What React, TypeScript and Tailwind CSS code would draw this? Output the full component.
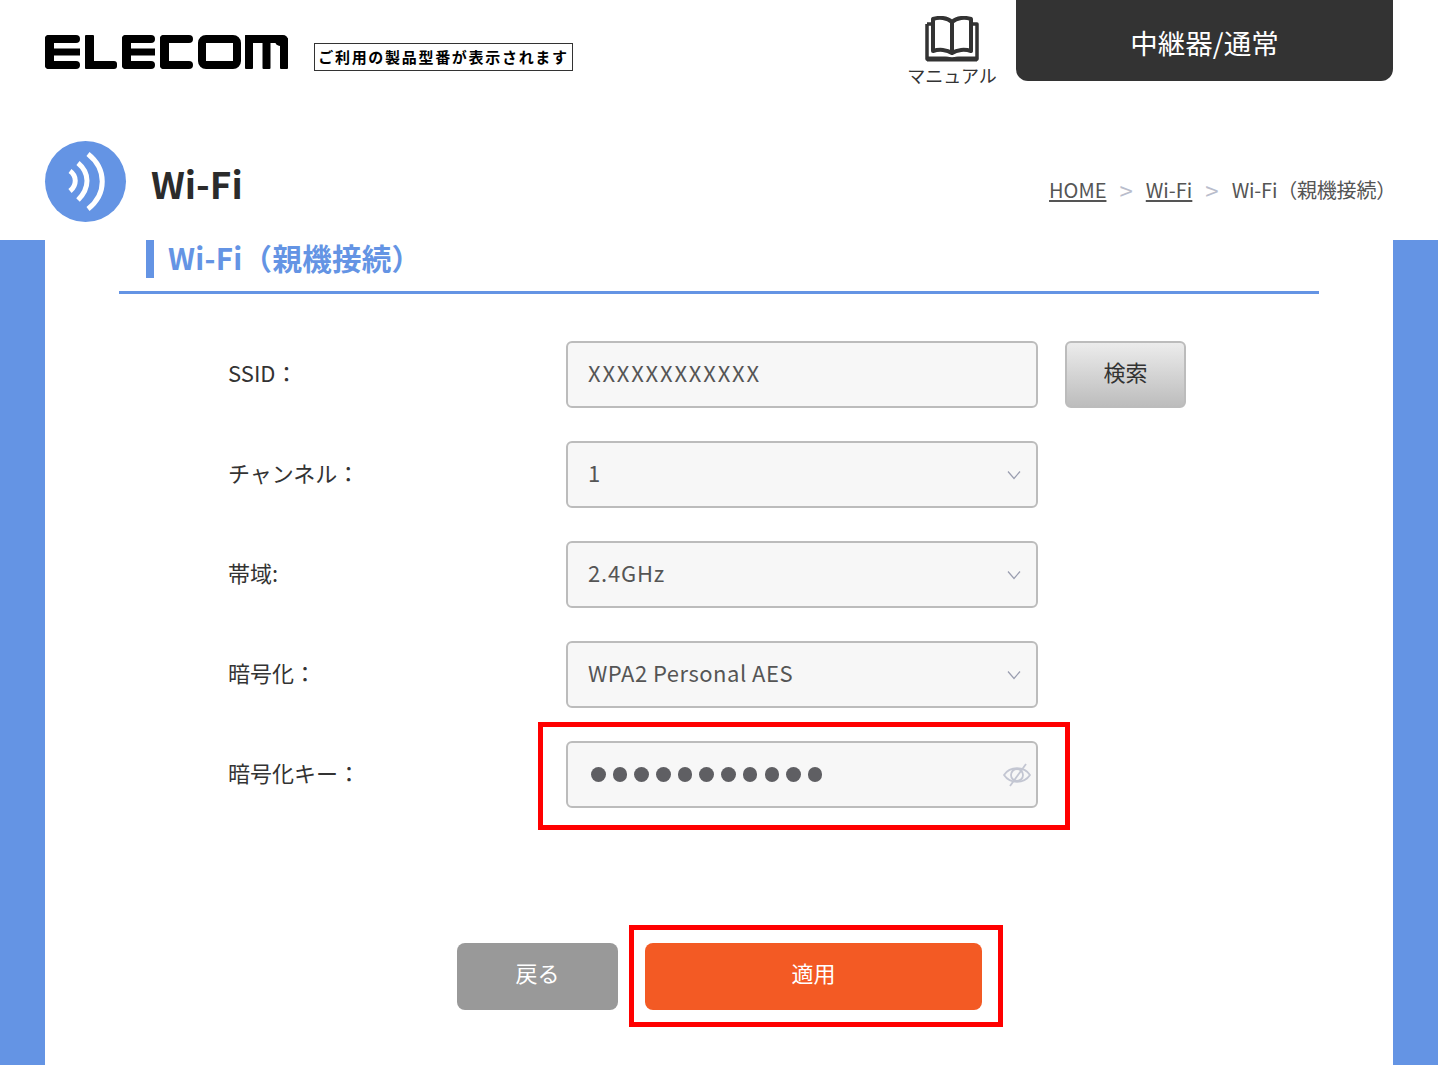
const font = { fontFamily: '"Noto Sans CJK JP", "Noto Sans", sans-serif' };

function ElecomLogo() {
  // wordmark drawn as blocks, the letters are squared off in the original
  return (
    <svg width="243" height="34" viewBox="0 0 243 34" role="img" aria-label="ELECOM" fill="#000">
      {/* E */}
      <rect x="0" y="0" width="35" height="8" rx="4" />
      <rect x="4" y="13.5" width="31" height="7" />
      <rect x="0" y="26" width="35" height="8" rx="4" />
      <rect x="0" y="0" width="9" height="34" rx="4" />
      {/* L */}
      <rect x="40" y="0" width="9" height="34" rx="1" />
      <rect x="40" y="26" width="32" height="8" rx="3" />
      {/* E */}
      <rect x="77" y="0" width="33" height="8" rx="4" />
      <rect x="81" y="13.5" width="29" height="7" />
      <rect x="77" y="26" width="33" height="8" rx="4" />
      <rect x="77" y="0" width="9" height="34" rx="4" />
      {/* C */}
      <rect x="115" y="0" width="33" height="8" rx="4" />
      <rect x="115" y="26" width="33" height="8" rx="4" />
      <rect x="115" y="0" width="9" height="34" rx="4" />
      {/* O */}
      <rect x="157" y="4" width="35" height="26" rx="4" fill="none" stroke="#000" strokeWidth="8" />
      {/* M */}
      <rect x="200" y="0" width="8" height="34" rx="1" />
      <rect x="217.500" y="0" width="8" height="34" rx="1" />
      <rect x="235" y="3" width="8" height="31" rx="1" />
      <rect x="200" y="0" width="38" height="8" rx="1" />
      <rect x="230" y="0" width="13" height="11" rx="5" />
    </svg>
  );
}

function BookIcon() {
  return (
    <svg width="54" height="46" viewBox="0 0 54 46" fill="none" stroke="#333">
      <path d="M27 6C22 1.5 14 1 8 3V35C14 33 22 33.5 27 37C32 33.500 40 33 46 35V3C40 1 32 1.500 27 6Z" strokeWidth="4" strokeLinejoin="round" />
      <path d="M27 6V37" strokeWidth="4" />
      <path d="M2 8V43H52V8H47M2 8H7" strokeWidth="3.5" strokeLinejoin="round" />
      <path d="M2 41H20C23 41 25 41.500 27 42.500C29 41.500 31 41 34 41H52V45H2Z" fill="#333" strokeWidth="1" />
    </svg>
  );
}

function WifiBadge() {
  return (
    <div className="w-[81px] h-[81px] rounded-full bg-[#6494e4] shrink-0">
      <svg width="81" height="81" viewBox="0 0 81 81" fill="none" stroke="#fff" strokeWidth="5">
        <path d="M25 30C32 35 32 44 25 50" />
        <path d="M33 22C45 32 45 47 33 59" />
        <path d="M43 13C62 28 62 53 43 68" />
      </svg>
    </div>
  );
}

function Chevron() {
  return (
    <svg width="14" height="10" viewBox="0 0 14 10" fill="none" stroke="#9a9eb0" strokeWidth="1.2">
      <path d="M1 1.500L7 8.500L13 1.500" />
    </svg>
  );
}

function EyeSlash() {
  return (
    <svg width="28" height="24" viewBox="0 0 28 24" fill="none" stroke="#c3c6d2" strokeWidth="1.800">
      <path d="M1 12C7 3 21 3 27 12C21 21 7 21 1 12Z" strokeLinejoin="round" />
      <circle cx="14" cy="12" r="6" />
      <path d="M23 1L7 23" />
    </svg>
  );
}

function Row({ label, children }: { label: string; children: React.ReactNode }) {
  return (
    <div className="flex items-center h-[67px]">
      <div className="w-[338px] pb-[4px] text-[22px] text-[#333]">{label}</div>
      {children}
    </div>
  );
}

function Field({ value, select, spacing }: { value: string; select?: boolean; spacing?: string }) {
  return (
    <div className="w-[472px] h-[67px] flex items-center justify-between pl-[20px] pr-[15px] rounded-md border-2 border-[#bcbcbc] bg-[#f7f7f7] text-[22px] text-[#555]">
      <span className={`mb-[4px] ${spacing ?? ""}`}>{value}</span>
      {select && <Chevron />}
    </div>
  );
}

export default function App() {
  return (
    <div className="w-[1438px] h-[1065px] overflow-hidden bg-white flex flex-col" style={font}>
      <header className="h-[141px] shrink-0 flex items-start pl-[45px] pr-[45px]">
        <div className="mt-[35px]">
          <ElecomLogo />
        </div>
        <div className="mt-[43px] ml-[26px] w-[259px] h-[28px] border border-[#333] flex items-center justify-center text-[15px] font-bold tracking-[1.700px] text-black whitespace-nowrap">
          ご利用の製品型番が表示されます
        </div>
        <div className="ml-auto mt-[16px] w-[88px] flex flex-col items-center">
          <BookIcon />
          <span className="text-[18px] leading-[24px] mt-[1px] text-[#333] whitespace-nowrap">マニュアル</span>
        </div>
        <div className="ml-[20px] w-[377px] h-[81px] rounded-b-xl bg-[#333] flex items-center justify-center pt-[4px] text-[27.500px] text-white">
          中継器/通常
        </div>
      </header>

      <div className="h-[99px] shrink-0 flex items-start pl-[45px] pr-[42px]">
        <WifiBadge />
        <h1 className="ml-[25px] mt-[16px] text-[37px] leading-[52px] font-bold text-[#2b2b2b]">Wi-Fi</h1>
        <nav className="ml-auto mt-[34px] flex items-center text-[20px] leading-[30px] text-[#555]">
          <span className="underline underline-offset-2">HOME</span>
          <span className="mx-[13px] text-[24px] leading-[30px] text-[#b9bdcc]">&gt;</span>
          <span className="underline underline-offset-2">Wi-Fi</span>
          <span className="mx-[13px] text-[24px] leading-[30px] text-[#b9bdcc]">&gt;</span>
          <span className="tracking-[-0.200px]">Wi-Fi（親機接続）</span>
        </nav>
      </div>

      <div className="flex-1 flex">
        <div className="w-[45px] bg-[#6494e4]" />
        <main className="flex-1 flex flex-col pl-[74px] pr-[74px]">
          <div className="border-b-[3px] border-[#6494e4] h-[54px] pl-[27px]">
            <h2 className="h-[38px] border-l-[8px] border-[#6494e4] pl-[14px] text-[29.500px] leading-[34px] tracking-[0.300px] font-bold text-[#6494e4] whitespace-nowrap">
              Wi-Fi（親機接続）
            </h2>
          </div>

          <div className="mt-[47px] pl-[109px] flex flex-col gap-[33px]">
            <Row label="SSID：">
              <Field value="XXXXXXXXXXXX" spacing="tracking-[1.800px]" />
              <button className="ml-[27px] w-[121px] h-[67px] pb-[6px] rounded-md border-2 border-[#bcbcbc] bg-gradient-to-b from-[#ececec] to-[#bdbdbd] text-[22px] text-[#333]">
                検索
              </button>
            </Row>
            <Row label="チャンネル：">
              <Field value="1" select />
            </Row>
            <Row label="帯域:">
              <Field value="2.4GHz" select spacing="tracking-[0.800px]" />
            </Row>
            <Row label="暗号化：">
              <Field value="WPA2 Personal AES" select spacing="tracking-[0.500px]" />
            </Row>
            <Row label="暗号化キー：">
              <div className="relative">
                <div className="w-[472px] h-[67px] flex items-center justify-between pl-[23px] pr-[5px] rounded-md border-2 border-[#bcbcbc] bg-[#f7f7f7]">
                  <div className="flex gap-[7.200px]">
                    {Array.from({ length: 11 }).map((_, i) => (
                      <span key={i} className="w-[14.500px] h-[14.500px] rounded-full bg-[#5f5f63]" />
                    ))}
                  </div>
                  <EyeSlash />
                </div>
                <div className="absolute left-[-28px] top-[-19px] w-[532px] h-[108px] border-[5px] border-[#ff0000]" />
              </div>
            </Row>
          </div>

          <div className="mt-[135px] pl-[338px] flex gap-[27px]">
            <button className="w-[161px] h-[67px] pb-[8px] rounded-lg bg-[#999] text-[22px] text-white">戻る</button>
            <div className="relative">
              <button className="block w-[337px] h-[67px] pb-[8px] rounded-lg bg-[#f35a24] text-[22px] text-white">適用</button>
              <div className="absolute left-[-16px] top-[-18px] w-[374px] h-[102px] border-[5px] border-[#ff0000]" />
            </div>
          </div>
        </main>
        <div className="w-[45px] bg-[#6494e4]" />
      </div>
    </div>
  );
}
